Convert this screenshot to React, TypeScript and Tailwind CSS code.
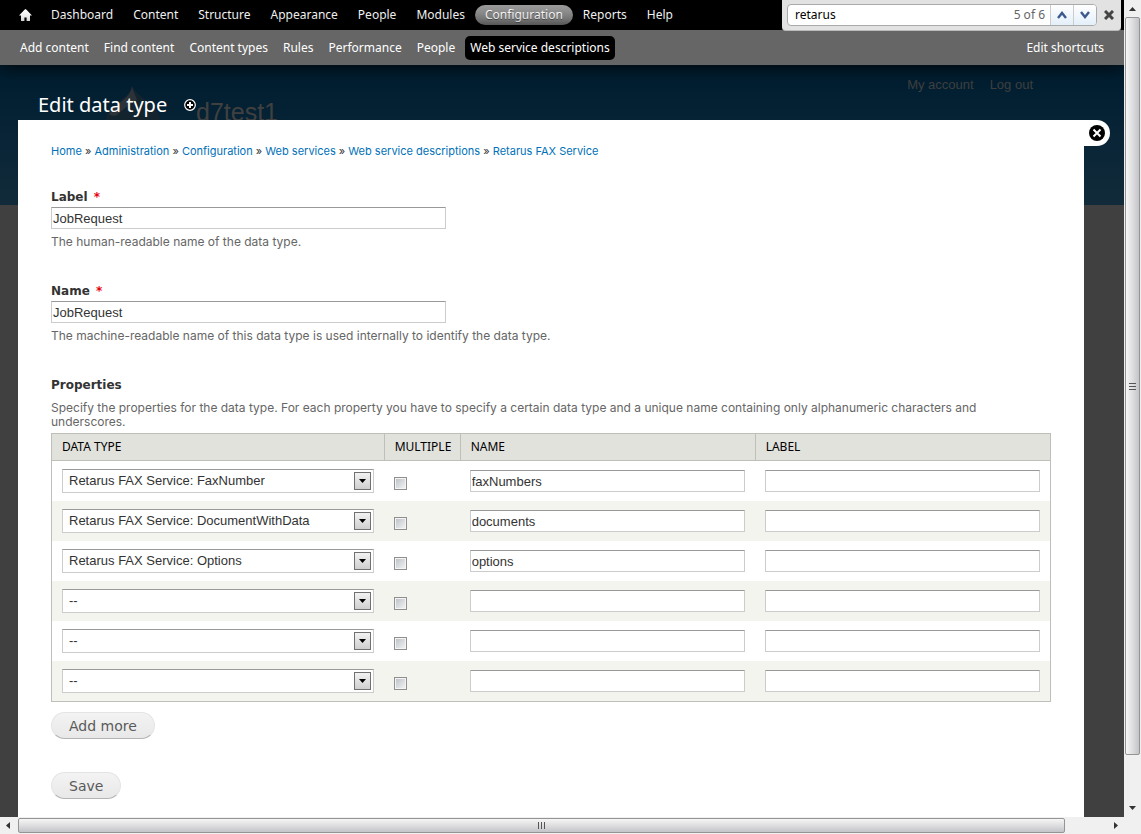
const uiFont = "font-['Noto_Sans',sans-serif]";
const arial = "font-['Liberation_Sans',sans-serif]";

const menu = ["Dashboard", "Content", "Structure", "Appearance", "People", "Modules", "Configuration", "Reports", "Help"];

const shortcuts = [
  "Add content",
  "Find content",
  "Content types",
  "Rules",
  "Performance",
  "People",
  "Web service descriptions",
];

const crumbs = [
  "Home",
  "Administration",
  "Configuration",
  "Web services",
  "Web service descriptions",
  "Retarus FAX Service",
];

const rows = [
  { type: "Retarus FAX Service: FaxNumber", name: "faxNumbers" },
  { type: "Retarus FAX Service: DocumentWithData", name: "documents" },
  { type: "Retarus FAX Service: Options", name: "options" },
  { type: "--", name: "" },
  { type: "--", name: "" },
  { type: "--", name: "" },
];

const textInput =
  "block h-[22px] border border-[#ccc] border-t-[#999] bg-white px-px text-[13px] leading-4 text-[#333] outline-none font-['Liberation_Sans',sans-serif]";

const helpText = "text-xs leading-[14px] text-[#666] font-[Inter,sans-serif]";

function Toolbar() {
  return (
    <nav aria-label="Administration" className="flex h-[30px] items-center bg-black pl-[15px] text-xs text-white">
      <a href="#home" aria-label="Home" className="px-1">
        <svg width="13" height="12" viewBox="0 0 13 12" fill="#fff">
          <path d="M6.500 0 5.500.8 0 6.500h2V12h3.400V8.500h2.200V12H11V6.500h2L7.500.8z" />
        </svg>
      </a>
      <ul className="flex pl-[5px]">
        {menu.map((item) => (
          <li key={item}>
            <a
              href={"#" + item.toLowerCase()}
              className={
                item === "Configuration"
                  ? "block rounded-full bg-linear-to-b from-[#9a9a9a] to-[#7c7c7c] px-2.5 leading-5 [text-shadow:0_1px_0_#555]"
                  : "block px-2.5 leading-5"
              }
            >
              {item}
            </a>
          </li>
        ))}
      </ul>
    </nav>
  );
}

function Shortcuts() {
  return (
    <nav
      aria-label="Shortcuts"
      className="relative z-10 flex h-[35px] items-center justify-between bg-[#666] pl-[15px] pr-[15px] text-xs text-white shadow-[0_0_20px_#000]"
    >
      <ul className="flex gap-[5px]">
        {shortcuts.map((item) => (
          <li key={item}>
            <a
              href="#shortcut"
              className={
                item === "Web service descriptions"
                  ? "block rounded-[5px] bg-black px-[5px] leading-6"
                  : "block px-[5px] leading-6"
              }
            >
              {item}
            </a>
          </li>
        ))}
      </ul>
      <a href="#edit-shortcuts" className="px-[5px]">
        Edit shortcuts
      </a>
    </nav>
  );
}

function FindBar() {
  return (
    <div className="absolute right-[3px] top-0 z-20 flex h-[31px] w-[339px] items-center rounded-b-sm border-b border-[#bbb] bg-[#e2e2e2] pl-[5px] pr-[7px]">
      <div className="flex h-[22px] flex-1 items-stretch overflow-hidden rounded-sm border border-[#aaa] bg-white">
        <input
          aria-label="Find in page"
          defaultValue="retarus"
          className="w-0 flex-1 px-[7px] text-xs text-black outline-none"
        />
        <span className="pr-[5px] text-xs leading-5 text-[#666]">5 of 6</span>
        <button type="button" aria-label="Previous" className="flex w-[23px] items-center justify-center border-l border-[#ccc] bg-linear-to-b from-white to-[#e4effa]">
          <svg width="10" height="8" viewBox="0 0 10 8" fill="none" stroke="#3d5a8c" strokeWidth="2.4">
            <path d="M1 7 5 2l4 5" />
          </svg>
        </button>
        <button type="button" aria-label="Next" className="flex w-[23px] items-center justify-center border-l border-[#ccc] bg-linear-to-b from-white to-[#e4effa]">
          <svg width="10" height="8" viewBox="0 0 10 8" fill="none" stroke="#3d5a8c" strokeWidth="2.4">
            <path d="M1 1l4 5 4-5" />
          </svg>
        </button>
      </div>
      <button type="button" aria-label="Close find bar" className="ml-[7px]">
        <svg width="10" height="10" viewBox="0 0 10 10" stroke="#444" strokeWidth="3">
          <path d="M1 1l8 8M9 1 1 9" />
        </svg>
      </button>
    </div>
  );
}

// dimmed site header behind the overlay
function SiteHeader() {
  return (
    <div className={"absolute inset-x-0 top-0 h-[140px] bg-linear-to-b from-[#001d30] to-[#122b3b] text-[#404040] " + arial}>
      <svg className="absolute left-[105px] top-[21px]" width="57" height="66" viewBox="0 0 57 66">
        <path d="M27 0c3 7 9 10 15 15 9 7 14 14 14 24 0 15-12 27-28 27S0 54 0 39c0-9 5-17 12-22C19 12 25 8 27 0z" fill="#14242f" />
        <path d="M27 0c1 6 4 10 5 14-6 3-13 8-20 15-3 1-6 1-8-1 3-6 8-9 13-13 5-4 9-8 10-15z" fill="#2c3338" />
      </svg>
      <span className="absolute left-[196px] top-[33px] text-[25px] leading-7">d7test1</span>
      <div className="flex justify-end gap-4 pr-[91px] pt-3 text-[13px] leading-4">
        <a href="#account">My account</a>
        <a href="#logout">Log out</a>
      </div>
    </div>
  );
}

function Field({ id, label, help }: { id: string; label: string; help: string }) {
  return (
    <div>
      <label htmlFor={id} className="block text-xs font-bold leading-5 text-[#333] font-['DejaVu_Sans',sans-serif]">
        {label} <span className="pl-0.5 text-red-600">*</span>
      </label>
      <input id={id} defaultValue="JobRequest" className={textInput + " w-[395px] max-w-full"} />
      <p className={"pt-1.5 " + helpText}>{help}</p>
    </div>
  );
}

function PropertiesTable() {
  const th = "h-[27px] border-r border-b border-[#bebfb9] px-2.5 text-left font-normal last:border-r-0";
  return (
    <table className="w-full table-fixed border-separate border-spacing-0 border border-[#bebfb9]">
      <colgroup>
        <col className="w-1/3" />
        <col className="w-[76px]" />
        <col className="w-[295px]" />
        <col />
      </colgroup>
      <thead className="bg-[#e1e2dc] text-xs text-black">
        <tr>
          <th className={th}>DATA TYPE</th>
          <th className={th}>MULTIPLE</th>
          <th className={th}>NAME</th>
          <th className={th}>LABEL</th>
        </tr>
      </thead>
      <tbody>
        {rows.map((row, i) => (
          <tr key={i} className="h-10 even:bg-[#f3f4ee]">
            <td className="pl-2.5 pr-[11px]">
              <div className="relative">
                <select
                  aria-label="Data type"
                  className={"block h-6 w-full appearance-none border border-[#ccc] border-t-[#999] bg-white pl-1.5 pr-6 text-[13px] text-[#333] outline-none " + arial}
                >
                  <option>{row.type}</option>
                </select>
                <span className="pointer-events-none absolute right-[3px] top-[3px] flex h-[18px] w-[17px] items-center justify-center border border-[#707070] bg-linear-to-b from-[#f2f2f2] to-[#cfcfcf]">
                  <svg width="7" height="4" viewBox="0 0 7 4">
                    <path d="M0 0h7L3.500 4z" />
                  </svg>
                </span>
              </div>
            </td>
            <td className="pl-[9px] pt-1">
              <input
                type="checkbox"
                aria-label="Multiple"
                className="block size-[13px] appearance-none border border-[#8e8f8f] bg-linear-to-br from-[#b9bec5] to-[#f6f6f6] shadow-[inset_0_0_0_1px_#f4f4f4]"
              />
            </td>
            <td className="pl-[9px] pr-[11px]">
              <input aria-label="Name" defaultValue={row.name} className={textInput + " w-full"} />
            </td>
            <td className="pl-[9px] pr-2.5">
              <input aria-label="Label" className={textInput + " w-full"} />
            </td>
          </tr>
        ))}
      </tbody>
    </table>
  );
}

function PillButton({ children }: { children: string }) {
  return (
    <button
      type="button"
      className="block h-[27px] rounded-full border border-[#e4e4e4] border-b-[#b4b4b4] bg-linear-to-b from-[#f3f3f3] to-[#e8e8e8] px-[17px] text-sm leading-6 text-[#5a5a5a] font-['DejaVu_Sans',sans-serif]"
    >
      {children}
    </button>
  );
}

function Overlay() {
  return (
    <div className="relative flex flex-1 flex-col pl-[18px] pr-10">
      <div className="flex h-[55px] items-center gap-[17px] pl-5 pt-6 text-white">
        <h1 className="text-xl leading-8">Edit data type</h1>
        <button type="button" aria-label="Add to shortcuts">
          <svg width="12" height="12" viewBox="0 0 12 12">
            <circle cx="6" cy="6" r="5.300" fill="#000" stroke="#fff" strokeWidth="1.200" />
            <path d="M6 3v6M3 6h6" stroke="#fff" strokeWidth="2" />
          </svg>
        </button>
      </div>
      <div className="relative flex-1 bg-white px-[33px]">
        <button
          type="button"
          aria-label="Close overlay"
          className="absolute left-full top-0 flex h-[26px] w-[26px] items-center rounded-r-full bg-white pl-[5px]"
        >
          <svg width="16" height="16" viewBox="0 0 16 16">
            <circle cx="8" cy="8" r="8" />
            <path d="M4.500 4.500l7 7M11.500 4.500l-7 7" stroke="#fff" strokeWidth="2" />
          </svg>
        </button>
        <nav aria-label="Breadcrumb" className="pt-6 text-[11px] leading-[14px] text-[#333] font-[Inter,sans-serif]">
          {crumbs.map((crumb, i) => (
            <span key={crumb}>
              {i > 0 && " » "}
              <a href="#crumb" className="text-[#0071b8]">
                {crumb}
              </a>
            </span>
          ))}
        </nav>
        <form className="pt-[29px]" onSubmit={(e) => e.preventDefault()}>
          <div className="flex flex-col gap-8">
            <Field id="label" label="Label" help="The human-readable name of the data type." />
            <Field
              id="name"
              label="Name"
              help="The machine-readable name of this data type is used internally to identify the data type."
            />
          </div>
          <h2 className="pt-8 text-xs font-bold leading-5 text-[#333] font-['DejaVu_Sans',sans-serif]">Properties</h2>
          <p className={"pb-1 pr-10 pt-1.5 " + helpText}>
            Specify the properties for the data type. For each property you have to specify a certain data type and a
            unique name containing only alphanumeric characters and underscores.
          </p>
          <PropertiesTable />
          <div className="flex flex-col items-start gap-[33px] pt-2.5">
            <PillButton>Add more</PillButton>
            <PillButton>Save</PillButton>
          </div>
        </form>
      </div>
    </div>
  );
}

function VerticalScrollbar() {
  return (
    <div aria-hidden="true" className="flex flex-col items-center bg-[#f0f0f0]">
      <svg width="17" height="17" viewBox="0 0 17 17">
        <path d="M5 11h7L8.500 7z" fill="#333" />
      </svg>
      <div className="flex w-[15px] flex-1 flex-col">
        <div className="flex flex-[737] items-center justify-center rounded-xs border border-[#949494] bg-linear-to-r from-[#f6f6f6] via-[#dedee0] to-[#c3c4c8]">
          <svg width="7" height="8" viewBox="0 0 7 8">
            <path d="M0 1.500h7M0 4.500h7M0 7.500h7" stroke="#555" strokeWidth="1" />
          </svg>
        </div>
        <div className="flex-[45]" />
      </div>
      <svg width="17" height="17" viewBox="0 0 17 17">
        <path d="M5 6h7l-3.500 4z" fill="#333" />
      </svg>
    </div>
  );
}

function HorizontalScrollbar() {
  return (
    <div aria-hidden="true" className="flex items-center bg-[#f0f0f0]">
      <svg width="18" height="17" viewBox="0 0 18 17">
        <path d="M10 5v7L6 8.500z" fill="#333" />
      </svg>
      <div className="flex h-[15px] flex-1">
        <div className="flex flex-[1047] items-center justify-center rounded-xs border border-[#949494] bg-linear-to-b from-[#f6f6f6] via-[#dedee0] to-[#c3c4c8]">
          <svg width="8" height="7" viewBox="0 0 8 7">
            <path d="M.5 0v7M3.500 0v7M6.500 0v7" stroke="#555" strokeWidth="1" />
          </svg>
        </div>
        <div className="flex-[41]" />
      </div>
      <svg width="18" height="17" viewBox="0 0 18 17">
        <path d="M8 5v7l4-3.500z" fill="#333" />
      </svg>
    </div>
  );
}

export default function App() {
  return (
    <div className={"grid h-screen grid-cols-[1fr_17px] grid-rows-[1fr_17px] bg-[#f0f0f0] " + uiFont}>
      <div className="relative flex min-h-0 flex-col overflow-hidden bg-[#404040]">
        <Toolbar />
        <Shortcuts />
        <div className="relative flex flex-1 flex-col">
          <SiteHeader />
          <Overlay />
        </div>
        <FindBar />
      </div>
      <VerticalScrollbar />
      <HorizontalScrollbar />
    </div>
  );
}
